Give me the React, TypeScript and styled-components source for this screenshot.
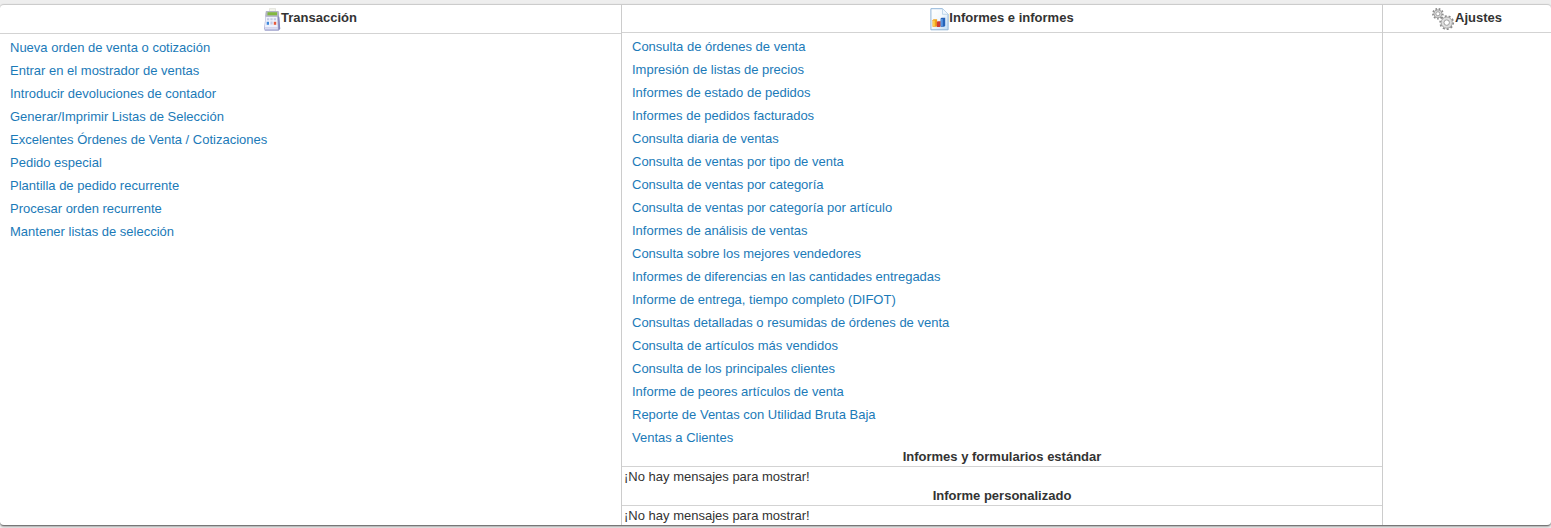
import React from 'react';
import styled, { createGlobalStyle } from 'styled-components';

const GlobalStyle = createGlobalStyle`
  * { box-sizing: border-box; }
  body {
    margin: 0;
    background: #eee;
    color: #333;
    font-family: "Liberation Sans", Arial, sans-serif;
    font-size: 13px;
    line-height: 19px;
  }
`;

const Page = styled.main`
  padding: 4px 0 2px;
`;

const Panel = styled.div`
  display: grid;
  grid-template-columns: 622fr 761fr 168fr;
  background: #fff;
  border-top: 1px solid #ccc;
  border-bottom: 1px solid #777;
  border-radius: 4px;
  box-shadow: 0 1px 2px #aaa;
`;

const Column = styled.section`
  min-width: 0;
  border-right: 1px solid #ccc;
  &:last-child { border-right: 0; }
`;

const Heading = styled.h2<{ $tall?: boolean }>`
  display: flex;
  justify-content: center;
  align-items: flex-start;
  height: ${(p) => (p.$tall ? 29 : 28)}px;
  margin: 0;
  padding-top: 3px;
  border-bottom: 1px solid #d3d3d3;
  font-size: 13px;
  svg { flex: none; display: block; }
`;

const Menu = styled.ul`
  margin: 0;
  padding: 2px 10px 0;
  list-style: none;
`;

const Item = styled.li`
  line-height: 23px;
`;

const Link = styled.a`
  color: #1b7ab8;
  text-decoration: none;
  &:hover { text-decoration: underline; }
`;

const SubHeading = styled.h3`
  margin: 0;
  padding-bottom: 2px;
  border-bottom: 1px solid #d3d3d3;
  font-size: 13px;
  line-height: 15px;
  text-align: center;
`;

const Message = styled.p`
  margin: 0;
  padding: 0 2px 2px;
  &:last-child { padding-bottom: 0; }
`;

const transactions = [
  'Nueva orden de venta o cotización',
  'Entrar en el mostrador de ventas',
  'Introducir devoluciones de contador',
  'Generar/Imprimir Listas de Selección',
  'Excelentes Órdenes de Venta / Cotizaciones',
  'Pedido especial',
  'Plantilla de pedido recurrente',
  'Procesar orden recurrente',
  'Mantener listas de selección',
];

const reports = [
  'Consulta de órdenes de venta',
  'Impresión de listas de precios',
  'Informes de estado de pedidos',
  'Informes de pedidos facturados',
  'Consulta diaria de ventas',
  'Consulta de ventas por tipo de venta',
  'Consulta de ventas por categoría',
  'Consulta de ventas por categoría por artículo',
  'Informes de análisis de ventas',
  'Consulta sobre los mejores vendedores',
  'Informes de diferencias en las cantidades entregadas',
  'Informe de entrega, tiempo completo (DIFOT)',
  'Consultas detalladas o resumidas de órdenes de venta',
  'Consulta de artículos más vendidos',
  'Consulta de los principales clientes',
  'Informe de peores artículos de venta',
  'Reporte de Ventas con Utilidad Bruta Baja',
  'Ventas a Clientes',
];

const LinkList = ({ items }: { items: string[] }) => (
  <Menu>
    {items.map((label) => (
      <Item key={label}>
        <Link href="#">{label}</Link>
      </Item>
    ))}
  </Menu>
);

const RegisterIcon = () => (
  <svg width="17" height="24" viewBox="0 0 17 24" aria-hidden="true">
    <path d="M5.5.6h6v3h-6z" fill="#f3f4ec" stroke="#dcddd2" strokeWidth=".7" />
    <path d="M2 3.2h12.6L16.2 21l-1.6 1.8H.8L.2 20.6z" fill="#9c9fcb" />
    <path d="M1.8 3.2h12.4l.4 5.2H1.3z" fill="#b3b6bf" />
    <path d="M3.6 4.2h9.4v3H3.4z" fill="#82b83f" />
    <path d="M1.7 8.8h11.6l.5 10.6H.9z" fill="#eef1fc" />
    <path d="M3 10.2h2.2v2H3zM6.4 10.2h2.2v2H6.4zM9.8 10.2H12v2H9.8zM6.4 13.6h2.2v3H6.4z" fill="#c3cae4" />
    <path d="M2.7 13.8h2.3v3H2.7z" fill="#3f88da" />
    <path d="M9.8 13.8h2.4v3H9.8z" fill="#e65a3d" />
    <path d="M1 19.3h12.9v2.2H1z" fill="#dadcf2" />
    <path d="M14.2 8.6l1 .3 1 11.8-1.5 1z" fill="#8486bb" />
  </svg>
);

const ReportIcon = () => (
  <svg width="19" height="23" viewBox="0 0 19 23" aria-hidden="true">
    <defs>
      <linearGradient id="sheet" x1="0" y1="0" x2="1" y2="1">
        <stop offset="0" stopColor="#fff" />
        <stop offset=".5" stopColor="#f2f8fd" />
        <stop offset="1" stopColor="#c0dcf4" />
      </linearGradient>
    </defs>
    <path d="M.9.7h11.6l5.6 5.6v15.5H.9z" fill="url(#sheet)" stroke="#8fb4d8" />
    <path d="M12.5.7v5.6h5.6" fill="#eff7fe" stroke="#b4cfe6" strokeWidth=".8" />
    <path d="M2.5 12.2l1-.9h3.6v6.6l-1 .9H2.5z" fill="#f0a01c" />
    <path d="M3 12.6h1.8v5.6H3z" fill="#fbd04f" />
    <path d="M6.8 14l.8-.7h3v5l-.8.7h-3z" fill="#cf3b32" />
    <path d="M10.6 10.6l1-.9h3.6v8.1l-1 .9h-3.6z" fill="#2562b8" />
    <path d="M11 11h1.8v7H11z" fill="#5796e2" />
  </svg>
);

interface GearProps {
  cx: number;
  cy: number;
  r: number;
  teeth: number;
}

const Gear = ({ cx, cy, r, teeth }: GearProps) => (
  <g>
    <circle cx={cx} cy={cy} r={r} fill="none" stroke="#8b8b8b" strokeWidth="1.8" pathLength={teeth * 2} strokeDasharray="1 1" />
    <circle cx={cx} cy={cy} r={r - 0.9} fill="#dedede" stroke="#9c9c9c" strokeWidth=".9" />
    <circle cx={cx} cy={cy} r={r * 0.42} fill="#fff" stroke="#a0a0a0" strokeWidth="1" />
  </g>
);

const GearsIcon = () => (
  <svg width="23" height="23" viewBox="0 0 23 23" aria-hidden="true">
    <Gear cx={5.9} cy={5.8} r={4.9} teeth={9} />
    <Gear cx={14.7} cy={14.6} r={6.5} teeth={10} />
  </svg>
);

export default function App() {
  return (
    <>
      <GlobalStyle />
      <Page>
        <Panel>
          <Column>
            <Heading $tall>
              <RegisterIcon />
              Transacción
            </Heading>
            <LinkList items={transactions} />
          </Column>
          <Column>
            <Heading>
              <ReportIcon />
              Informes e informes
            </Heading>
            <LinkList items={reports} />
            <SubHeading>Informes y formularios estándar</SubHeading>
            <Message>¡No hay mensajes para mostrar!</Message>
            <SubHeading>Informe personalizado</SubHeading>
            <Message>¡No hay mensajes para mostrar!</Message>
          </Column>
          <Column>
            <Heading>
              <GearsIcon />
              Ajustes
            </Heading>
          </Column>
        </Panel>
      </Page>
    </>
  );
}
